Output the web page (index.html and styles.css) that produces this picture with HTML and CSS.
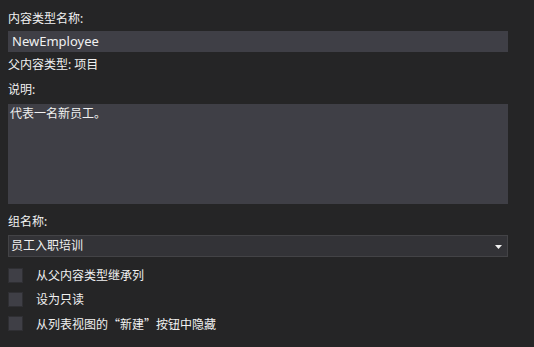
FILE: index.html
```html
<!DOCTYPE html>
<html>
<head>
<meta charset="utf-8">
<link rel="stylesheet" href="styles.css">
</head>
<body>
<div class="form">
  <div class="label l1">内容类型名称:</div>
  <div class="field input">NewEmployee</div>
  <div class="label l2">父内容类型: 项目</div>
  <div class="label l3">说明:</div>
  <div class="field textarea">代表一名新员工。</div>
  <div class="label l4">组名称:</div>
  <div class="field select">
    <span>员工入职培训</span>
    <svg class="arrow" width="7" height="4" viewBox="0 0 7 4"><path d="M0 0H7L3.5 4Z" fill="#f1f1f1"/></svg>
  </div>
  <div class="checks">
    <div class="check"><span class="box"></span><span class="ctext">从父内容类型继承列</span></div>
    <div class="check"><span class="box"></span><span class="ctext">设为只读</span></div>
    <div class="check"><span class="box"></span><span class="ctext">从列表视图的<span class="cjk">“</span>新建<span class="cjk">”</span>按钮中隐藏</span></div>
  </div>
</div>
</body>
</html>
```

FILE: styles.css
```css
html, body {
  margin: 0;
  padding: 0;
  background: #252526;
  height: 100%;
}
body {
  font-family: "Noto Sans", "Noto Sans CJK SC", sans-serif;
  font-size: 12px;
  line-height: 16px;
  color: #f1f1f1;
}
.cjk {
  font-family: "Noto Sans CJK SC", sans-serif;
}
.form {
  padding: 11px 26px 0 8px;
  display: flex;
  flex-direction: column;
}
.label {
  height: 16px;
}
.l1 { margin-bottom: 4px; }
.l2 { margin-top: 5px; }
.l3 { margin-top: 9px; margin-bottom: 6px; }
.l4 { margin-top: 10px; margin-bottom: 5px; }
.field {
  box-sizing: border-box;
  background: #3f3f46;
}
.input {
  height: 21px;
  padding: 2px 4px;
  font-size: 13px;
  line-height: 17px;
}
.textarea {
  height: 100px;
  padding: 2px 2px;
}
.select {
  height: 22px;
  background: #333337;
  border: 1px solid #434346;
  padding: 2px 2px;
  display: flex;
  align-items: center;
  justify-content: space-between;
}
.arrow {
  margin-right: 3px;
  margin-top: 1px;
}
.checks {
  margin-top: 11px;
  display: flex;
  flex-direction: column;
}
.check {
  height: 24px;
  display: flex;
  align-items: flex-start;
}
.box {
  box-sizing: border-box;
  width: 15px;
  height: 15px;
  background: #3f3f46;
  border: 1px solid #2f2f33;
}
.ctext {
  margin-left: 13px;
  line-height: 15px;
}
```
